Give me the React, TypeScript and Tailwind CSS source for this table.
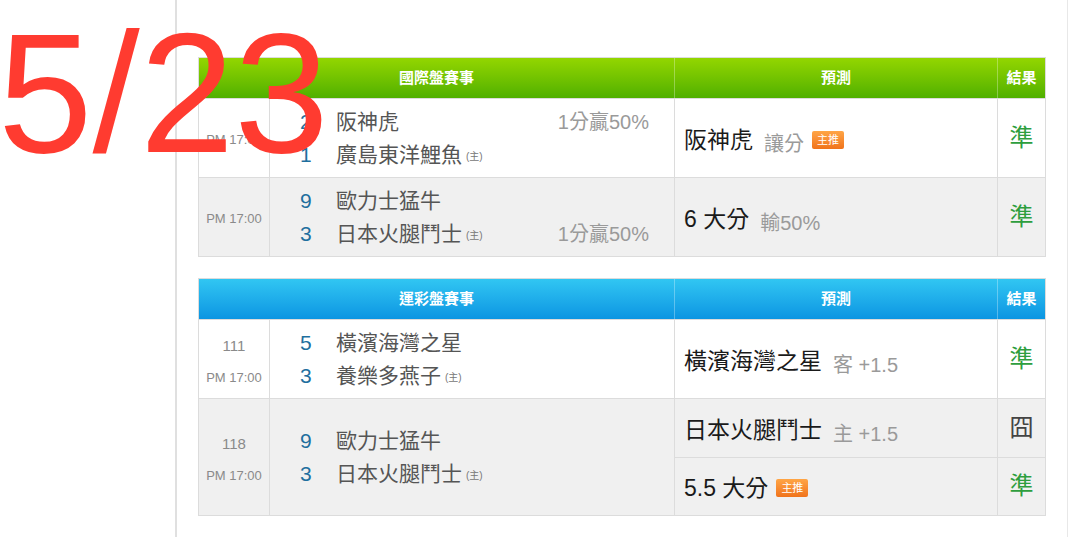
import React from "react";

type Line = { score: number; name: string; home?: boolean; note?: string };
type Pick = { main: string; sub?: string; badge?: boolean; result: string };
type Row = { no?: string; time: string; teams: Line[]; picks: Pick[]; gray?: boolean };

const FONT = { fontFamily: '"Liberation Sans", "Noto Sans CJK TC", sans-serif' };

const intlRows: Row[] = [
  {
    time: "PM 17:00",
    teams: [
      { score: 2, name: "阪神虎", note: "1分贏50%" },
      { score: 1, name: "廣島東洋鯉魚", home: true },
    ],
    picks: [{ main: "阪神虎", sub: "讓分", badge: true, result: "準" }],
  },
  {
    time: "PM 17:00",
    gray: true,
    teams: [
      { score: 9, name: "歐力士猛牛" },
      { score: 3, name: "日本火腿鬥士", home: true, note: "1分贏50%" },
    ],
    picks: [{ main: "6 大分", sub: "輸50%", result: "準" }],
  },
];

const sportRows: Row[] = [
  {
    no: "111",
    time: "PM 17:00",
    teams: [
      { score: 5, name: "橫濱海灣之星" },
      { score: 3, name: "養樂多燕子", home: true },
    ],
    picks: [{ main: "橫濱海灣之星", sub: "客 +1.5", result: "準" }],
  },
  {
    no: "118",
    time: "PM 17:00",
    gray: true,
    teams: [
      { score: 9, name: "歐力士猛牛" },
      { score: 3, name: "日本火腿鬥士", home: true },
    ],
    picks: [
      { main: "日本火腿鬥士", sub: "主 +1.5", result: "囧" },
      { main: "5.5 大分", badge: true, result: "準" },
    ],
  },
];

const Badge = () => (
  <span className="ml-2 inline-flex h-[18px] w-[32px] items-center justify-center rounded-[2px] bg-gradient-to-b from-[#ffa545] to-[#f0731a] text-[11px] leading-none text-white">
    主推
  </span>
);

const GameTable = ({ title, rows, blue }: { title: string; rows: Row[]; blue?: boolean }) => {
  const head = blue
    ? "bg-gradient-to-b from-[#31c6f2] to-[#0b95e2]"
    : "bg-gradient-to-b from-[#93d600] to-[#4fb000]";
  return (
    <div className="border border-[#dcdcdc]" style={FONT}>
      <div className={`grid h-10 grid-cols-[476px_323px_1fr] text-[15px] font-bold text-white ${head}`}>
        <div className="flex items-center justify-center border-r border-white/30">{title}</div>
        <div className="flex items-center justify-center border-r border-white/30">預測</div>
        <div className="flex items-center justify-center">結果</div>
      </div>
      {rows.map((row, i) => (
        <div
          key={i}
          className={`grid grid-cols-[71px_405px_323px_1fr] border-t border-[#dcdcdc] ${row.gray ? "bg-[#f0f0f0]" : "bg-white"}`}
        >
          <div className="flex flex-col items-center justify-center gap-[10px] border-r border-[#dcdcdc] pt-1 text-[13px] text-[#8a8a8a]">
            {row.no && <span className="text-[15px]">{row.no}</span>}
            <span>{row.time}</span>
          </div>
          <div
            className={`flex flex-col justify-center gap-[6px] border-r border-[#dcdcdc] pl-[30px] pr-[25px] ${row.picks.length > 1 ? "h-[116px]" : "h-[78px]"}`}
          >
            {row.teams.map((t, j) => (
              <div key={j} className="flex h-[27px] items-center">
                <span className="w-[36px] text-[21px] text-[#1f6f9e]">{t.score}</span>
                <span className="text-[21px] text-[#555]">{t.name}</span>
                {t.home && <span className="ml-1 mt-1 text-[10px] text-[#777]">(主)</span>}
                {t.note && <span className="ml-auto text-[20px] text-[#9a9a9a]">{t.note}</span>}
              </div>
            ))}
          </div>
          <div className="col-span-2 flex flex-col">
            {row.picks.map((p, k) => (
              <div
                key={k}
                className={`grid flex-1 grid-cols-[323px_1fr] ${k > 0 ? "border-t border-[#dcdcdc]" : ""}`}
              >
                <div className="flex items-center border-r border-[#dcdcdc] pl-[9px] pt-1">
                  <span className="text-[23px] text-[#1a1a1a]">{p.main}</span>
                  {p.sub && <span className="ml-[11px] mt-2 text-[20px] text-[#9a9a9a]">{p.sub}</span>}
                  {p.badge && <Badge />}
                </div>
                <div
                  className={`flex items-center justify-center text-[24px] ${p.result === "準" ? "text-[#2e9e3e]" : "text-[#444]"}`}
                >
                  {p.result}
                </div>
              </div>
            ))}
          </div>
        </div>
      ))}
    </div>
  );
};

export default function App() {
  return (
    <div className="relative flex h-[537px] w-[1080px] overflow-hidden bg-white">
      <div className="w-[177px] shrink-0 border-r-2 border-[#e0e0e0] bg-white" />
      <div className="flex w-[890px] shrink-0 flex-col gap-[21px] px-[21px] pt-[57px]">
        <GameTable title="國際盤賽事" rows={intlRows} />
        <GameTable title="運彩盤賽事" rows={sportRows} blue />
      </div>
      <div className="flex-1 border-l border-[#e8e8e8]" />
      <div
        className="absolute left-[-2px] top-[8px] text-[170px] leading-none text-[#ff3b30]"
        style={{ fontFamily: '"Liberation Sans", sans-serif' }}
      >
        5/23
      </div>
    </div>
  );
}
